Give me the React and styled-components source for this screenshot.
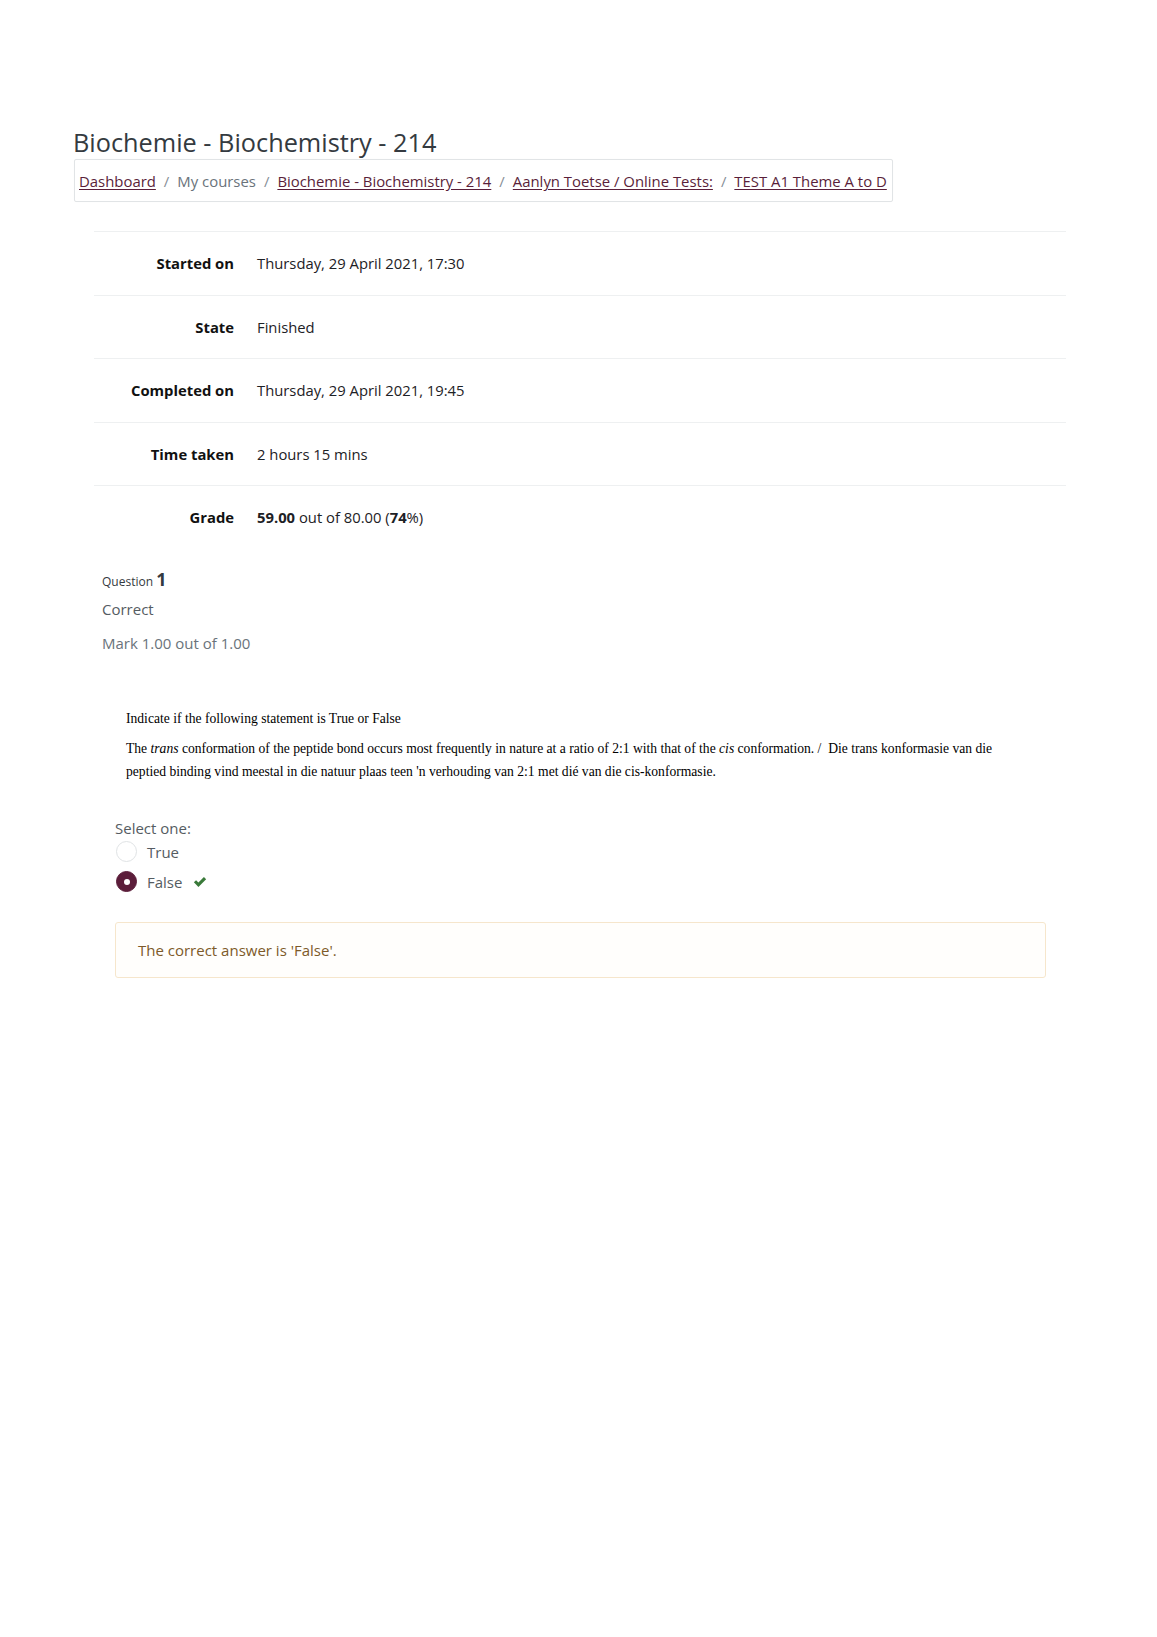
import React from "react";
import styled, { createGlobalStyle } from "styled-components";

const GlobalStyle = createGlobalStyle`
  html, body {
    margin: 0;
    padding: 0;
    background: #fff;
  }
  body {
    font-family: "Open Sans", "Noto Sans", sans-serif;
    color: #1d2125;
  }
`;

const summary = [
  { label: "Started on", value: "Thursday, 29 April 2021, 17:30" },
  { label: "State", value: "Finished" },
  { label: "Completed on", value: "Thursday, 29 April 2021, 19:45" },
  { label: "Time taken", value: "2 hours 15 mins" },
  {
    label: "Grade",
    value: (
      <>
        <b>59.00</b> out of 80.00 (<b>74</b>%)
      </>
    ),
  },
];

const crumbs = [
  { text: "Dashboard", link: true },
  { text: "My courses", link: false },
  { text: "Biochemie - Biochemistry - 214", link: true },
  { text: "Aanlyn Toetse / Online Tests:", link: true },
  { text: "TEST A1 Theme A to D", link: true },
];

export default function App() {
  return (
    <Page>
      <GlobalStyle />
      <Title>Biochemie - Biochemistry - 214</Title>
      <Breadcrumb>
        {crumbs.map((c, i) => (
          <Crumb key={c.text}>
            {i > 0 && <Sep>/</Sep>}
            {c.link ? <CrumbLink href="#">{c.text}</CrumbLink> : <span>{c.text}</span>}
          </Crumb>
        ))}
      </Breadcrumb>

      <Summary>
        {summary.map((row) => (
          <Row key={row.label}>
            <Label>{row.label}</Label>
            <Value>{row.value}</Value>
          </Row>
        ))}
      </Summary>

      <Question>
        <Info>
          <QNo>
            Question <span>1</span>
          </QNo>
          <State>Correct</State>
          <Grade>Mark 1.00 out of 1.00</Grade>
        </Info>

        <Formulation>
          <QText>
            <p>Indicate if the following statement is True or False</p>
            <p>
              The <i>trans</i> conformation of the peptide bond occurs most frequently in nature at
              a ratio of 2:1 with that of the <i>cis</i> conformation. /&nbsp; Die trans
              konformasie van die peptied binding vind meestal in die natuur plaas teen 'n
              verhouding van 2:1 met dié van die cis-konformasie.
            </p>
          </QText>

          <Prompt>Select one:</Prompt>
          <Option>
            <Radio />
            <OptionLabel>True</OptionLabel>
          </Option>
          <Option>
            <Radio checked />
            <OptionLabel>False</OptionLabel>
            <Check viewBox="0 0 16 16">
              <path d="M1 8.4 L3.5 5.9 L6.2 8.6 L12.5 2.3 L15 4.8 L6.2 13.6 Z" fill="currentColor" />
            </Check>
          </Option>

          <Feedback>The correct answer is 'False'.</Feedback>
        </Formulation>
      </Question>
    </Page>
  );
}

const Page = styled.div`
  padding: 127px 0 0 73px;
  min-height: 1637px;
  box-sizing: border-box;
`;

const Title = styled.h1`
  margin: 0;
  font-size: 25.3px;
  font-weight: 400;
  line-height: 30px;
  color: #343a40;
`;

const Breadcrumb = styled.nav`
  display: inline-flex;
  align-items: center;
  margin: 2px 0 0 1px;
  height: 43px;
  padding: 0 5px 0 4px;
  border: 1px solid #e1e4e6;
  border-radius: 2px;
  box-sizing: border-box;
  box-shadow: 0 0 1px rgba(0, 0, 0, 0.04);
  font-size: 14.9px;
  color: #6a737b;
`;

const Crumb = styled.span`
  display: inline-flex;
  align-items: center;
  white-space: nowrap;
`;

const Sep = styled.span`
  padding: 0 8px 0 8px;
  color: #868e96;
`;

const CrumbLink = styled.a`
  color: #5a1f3a;
  text-decoration: underline;
  text-underline-offset: 2px;
`;

const Summary = styled.div`
  margin: 29px 0 0 21px;
  width: 972px;
`;

const Row = styled.div`
  display: flex;
  align-items: center;
  height: 63.5px;
  border-top: 1px solid #eef0f1;
  box-sizing: border-box;
  font-size: 14.8px;
`;

const Label = styled.div`
  width: 140px;
  padding-right: 23px;
  text-align: right;
  font-weight: 700;
  color: #111;
`;

const Value = styled.div`
  color: #1d2125;
  b {
    font-weight: 700;
  }
`;

const Question = styled.div`
  margin: 19px 0 0 21px;
  width: 972px;
`;

const Info = styled.div`
  padding-left: 8px;
  color: #555c62;
`;

const QNo = styled.div`
  font-size: 12px;
  line-height: 22px;
  color: #343a40;
  span {
    font-size: 18px;
    font-weight: 700;
  }
`;

const State = styled.div`
  margin-top: 5px;
  font-size: 15px;
  line-height: 22px;
  color: #555c62;
`;

const Grade = styled.div`
  margin-top: 12px;
  font-size: 15px;
  line-height: 22px;
  color: #6a737b;
`;

const Formulation = styled.div`
  margin: 53px 0 0 21px;
  width: 931px;
`;

const QText = styled.div`
  padding: 0 22px 0 11px;
  font-family: "Liberation Serif", "Times New Roman", serif;
  font-size: 13.6px;
  line-height: 23px;
  color: #000;
  p {
    margin: 0 0 7px;
  }
  p:last-child {
    margin: 0;
  }
`;

const Prompt = styled.div`
  margin-top: 36px;
  font-size: 15px;
  line-height: 18px;
  color: #555c62;
`;

const Option = styled.div`
  display: flex;
  align-items: center;
  height: 30px;
  padding-left: 1px;
`;

const Radio = styled.span`
  width: 21px;
  height: 21px;
  border-radius: 50%;
  box-sizing: border-box;
  border: 1px solid ${(props) => (props.checked ? "#5b1d3a" : "#e0e3e5")};
  background: ${(props) => (props.checked ? "#5b1d3a" : "#fff")};
  display: flex;
  align-items: center;
  justify-content: center;
  &::after {
    content: "";
    display: ${(props) => (props.checked ? "block" : "none")};
    width: 6px;
    height: 6px;
    border-radius: 50%;
    background: #fff;
  }
`;

const OptionLabel = styled.span`
  margin-left: 10px;
  font-size: 15px;
  color: #555c62;
`;

const Check = styled.svg`
  width: 14px;
  height: 14px;
  margin-left: 11px;
  color: #3a7a3a;
`;

const Feedback = styled.div`
  margin-top: 25px;
  padding: 16px 22px;
  border: 1px solid #f6e6cc;
  border-radius: 3px;
  background: #fffefc;
  font-size: 15px;
  line-height: 22px;
  color: #7d5a29;
`;
